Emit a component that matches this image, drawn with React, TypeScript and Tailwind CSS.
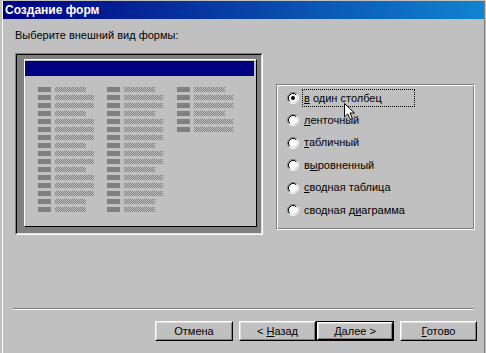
import React from "react";

const Radio = ({ checked }: { checked?: boolean }) => (
  <svg width="12" height="12" viewBox="0 0 12 12" className="shrink-0">
    <circle cx="6" cy="6" r="4.5" fill="#ffffff" />
    <path d="M2.11 9.89 A5.5 5.5 0 0 1 9.89 2.11" stroke="#808080" strokeWidth="1" fill="none" />
    <path d="M9.89 2.11 A5.5 5.5 0 0 1 2.11 9.89" stroke="#ffffff" strokeWidth="1" fill="none" />
    <path d="M2.82 9.18 A4.5 4.5 0 0 1 9.18 2.82" stroke="#000000" strokeWidth="1" fill="none" />
    <path d="M9.18 2.82 A4.5 4.5 0 0 1 2.82 9.18" stroke="#dfdfdf" strokeWidth="1" fill="none" />
    {checked && <circle cx="6" cy="6" r="2" fill="#000000" />}
  </svg>
);

const Raised = ({ children, className = "" }: { children: React.ReactNode; className?: string }) => (
  <div className={`border border-t-white border-l-white border-r-black border-b-black ${className}`}>
    <div className="w-full h-full border border-t-[#dfdfdf] border-l-[#dfdfdf] border-r-[#808080] border-b-[#808080] bg-[#c0c0c0] flex items-center justify-center text-[11px] leading-[13px] text-black">
      <span className="whitespace-pre">{children}</span>
    </div>
  </div>
);

const S = 31;
const L = 39;
const pattern12 = [S, L, L, S, L, L, L, S, L, L, S, L, L, L, S, S];
const pattern3 = [S, L, L, S, L, L];

const Thumb = () => {
  const cols = [
    { lx: 13, vx: 30, rows: pattern12 },
    { lx: 82, vx: 99, rows: pattern12 },
    { lx: 152, vx: 169, rows: pattern3 },
  ];
  return (
    <svg width="231" height="166" viewBox="0 0 231 166" shapeRendering="crispEdges" className="block">
      <defs>
        <pattern id="dither" width="2" height="2" patternUnits="userSpaceOnUse">
          <rect width="2" height="2" fill="#c0c0c0" />
          <rect x="0" y="0" width="1" height="1" fill="#808080" />
          <rect x="1" y="1" width="1" height="1" fill="#808080" />
        </pattern>
      </defs>
      <rect x="0" y="1" width="229" height="15" fill="#000080" />
      {cols.map((c, ci) =>
        c.rows.map((w, ri) => (
          <g key={`${ci}-${ri}`}>
            <rect x={c.lx} y={27 + ri * 8} width="13" height="5" fill="#808080" />
            <rect x={c.vx} y={27 + ri * 8} width={w} height="5" fill="url(#dither)" />
          </g>
        ))
      )}
    </svg>
  );
};

const items: { pre: string; u: string; post: string; h: string; checked?: boolean }[] = [
  { pre: "", u: "в", post: " один столбец", h: "h-[22px]", checked: true },
  { pre: "", u: "л", post: "енточный", h: "h-[22px]" },
  { pre: "", u: "т", post: "абличный", h: "h-[23px]" },
  { pre: "в", u: "ы", post: "ровненный", h: "h-[22px]" },
  { pre: "", u: "с", post: "водная таблица", h: "h-[23px]" },
  { pre: "сводная д", u: "и", post: "аграмма", h: "h-[22px]" },
];

const Cursor = () => (
  <svg width="13" height="18" viewBox="0 0 13 18" className="absolute left-[344px] top-[103px]">
    <path
      d="M0.5 0.5 V14 L3.7 10.9 L6.2 16.5 L8.4 15.5 L6 10 H10.5 Z"
      fill="#ffffff"
      stroke="#000000"
      strokeWidth="1"
      strokeLinejoin="miter"
    />
  </svg>
);

export default function App() {
  return (
    <div className="relative w-[486px] h-[353px] bg-[#c0c0c0] pt-[1px] pl-[2px] pr-[1px] overflow-hidden font-['Liberation_Sans',Arial,sans-serif] text-black">
      <div className="h-full border-l border-l-white border-r border-r-[#808080] flex flex-col">
        <div className="h-[18px] bg-[linear-gradient(to_right,#000080,#1084d0)] flex items-center pl-[2px]">
          <span className="text-white font-bold text-[12px] leading-[14px]">Создание форм</span>
        </div>

        <div className="mt-[10px] pl-[12px] text-[11px] leading-[13px]">Выберите внешний вид формы:</div>

        <div className="mt-[11px] pl-[12px] flex items-start">
          <div className="w-[248px] h-[182px] border border-t-[#808080] border-l-[#808080] border-r-white border-b-white">
            <div className="w-full h-full border border-t-black border-l-black border-r-[#dfdfdf] border-b-[#dfdfdf] bg-[#808080] pt-[4px] pl-[7px]">
              <div className="w-[233px] h-[168px] border border-t-white border-l-white border-r-black border-b-black bg-[#c0c0c0]">
                <Thumb />
              </div>
            </div>
          </div>

          <div className="ml-[13px] mt-[31px] w-[199px] h-[146px] border border-t-[#808080] border-l-[#808080] border-r-white border-b-white">
            <div className="w-full h-full border border-t-white border-l-white border-r-[#808080] border-b-[#808080] pt-[1px] pl-[9px] flex flex-col">
              {items.map((it, i) => (
                <div key={i} className={`${it.h} flex items-center`}>
                  <Radio checked={it.checked} />
                  <div
                    className={`ml-[3px] w-[113px] h-[18px] pl-[1px] flex items-center border border-dotted text-[11px] leading-[13px] ${
                      i === 0 ? "border-black" : "border-transparent"
                    }`}
                  >
                    <span className="whitespace-pre">
                      {it.pre}
                      <span className="underline">{it.u}</span>
                      {it.post}
                    </span>
                  </div>
                </div>
              ))}
            </div>
          </div>
        </div>

        <div className="mt-[73px] mx-[10px] h-[2px] border-t border-t-[#808080] border-b border-b-white" />

        <div className="mt-[11px] flex justify-end pr-[7px]">
          <Raised className="w-[78px] h-[20px]">Отмена</Raised>
          <Raised className="ml-[6px] w-[77px] h-[20px]">
            {"< "}<span className="underline">Н</span>азад
          </Raised>
          <div className="w-[78px] h-[20px] border border-black">
            <Raised className="w-full h-full">
              <span className="underline">Д</span>алее{" >"}
            </Raised>
          </div>
          <Raised className="ml-[6px] w-[77px] h-[20px]">
            <span className="underline">Г</span>отово
          </Raised>
        </div>
      </div>
      <Cursor />
    </div>
  );
}
